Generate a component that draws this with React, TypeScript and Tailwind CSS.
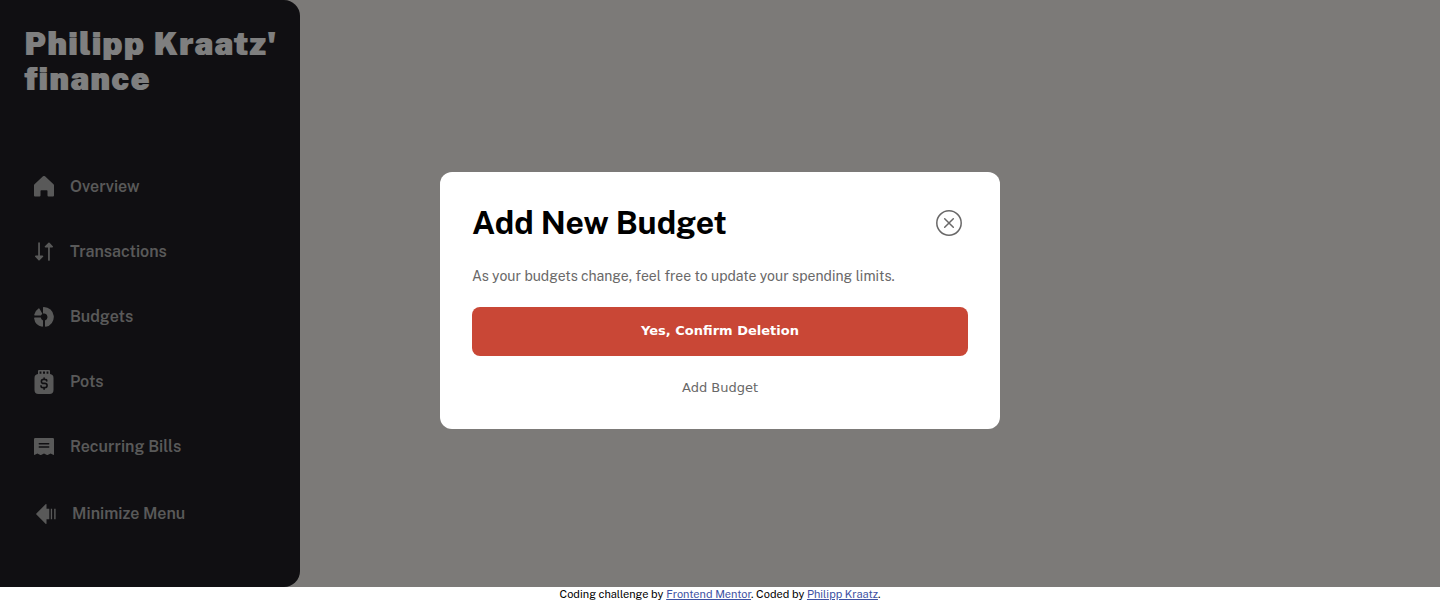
import type { ReactNode } from "react";

const OverviewIcon = () => (
  <svg width="20" height="21" viewBox="0 0 20 21" fill="currentColor" aria-hidden="true">
    <path d="M20 9.3V19.500a1 1 0 0 1-1 1h-4.500a1 1 0 0 1-1-1V15a.75.75 0 0 0-.75-.75h-5.500A.75.75 0 0 0 6.500 15v4.500a1 1 0 0 1-1 1H1a1 1 0 0 1-1-1V9.300a1.500 1.500 0 0 1 .5-1.110L9 .35a1.500 1.500 0 0 1 2 0l8.500 7.840a1.500 1.500 0 0 1 .5 1.110Z" />
  </svg>
);

const TransactionsIcon = () => (
  <svg width="18" height="19" viewBox="0 0 18 19" fill="currentColor" aria-hidden="true">
    <path d="M8.100 14.800 4.600 18.300a.8.8 0 0 1-1.150 0L.2 14.800a.78.78 0 0 1 .55-1.300H3.200V1a.85.85 0 0 1 1.700 0v12.500h2.600a.78.78 0 0 1 .6 1.300Z" />
    <path d="M17.800 4.200 14.550.7a.8.8 0 0 0-1.150 0L9.900 4.200a.78.78 0 0 0 .6 1.300h2.600V18a.85.85 0 0 0 1.700 0V5.500h2.450a.78.78 0 0 0 .55-1.300Z" />
  </svg>
);

const BudgetsIcon = () => (
  <svg width="20" height="20" viewBox="0 0 20 20" fill="currentColor" aria-hidden="true">
    <path d="M6.900 8.500A3.500 3.500 0 0 1 8 7.200a.7.7 0 0 0 .2-.8L5.500 1.700a.7.7 0 0 0-1-.2A10 10 0 0 0 .2 7.700a.7.700 0 0 0 .7.800Z" />
    <path d="M9 13.400a3.500 3.500 0 0 1-2.200-2.900H.8a.7.700 0 0 0-.7.800A10 10 0 0 0 8.300 19.800a.7.700 0 0 0 .7-.7Z" />
    <path d="M9 .8v5.200a.6.6 0 0 0 .5.600 3.500 3.500 0 0 1 1.500 6.800v5.700a.7.700 0 0 0 .8.700A10 10 0 0 0 9.800 0 .75.75 0 0 0 9 .8Z" />
  </svg>
);

const PotsIcon = () => (
  <svg width="20" height="24" viewBox="-1 0 20 24" fill="currentColor" aria-hidden="true">
    <path
      fillRule="evenodd"
      d="M4 0h10A1 1 0 0 1 15 1V4a4 4 0 0 1 3.500 3.900V20a4 4 0 0 1-4 4H3.500a4 4 0 0 1-4-4V7.900A4 4 0 0 1 3 4V1A1 1 0 0 1 4 0ZM4.600 1.400V3.800H6.400V1.400ZM8 1.400V3.800h2V1.400Zm3.600 0V3.800h1.800V1.400Z"
    />
    <path
      d="M11.800 11c0-1-1-1.600-2.200-1.600H8.600c-1.200 0-2.200.8-2.200 2s1 2 2.200 2h1.200c1.300 0 2.300.8 2.300 2.100s-1 2.100-2.300 2.100H8.300c-1.300 0-2.300-.7-2.300-1.700M9.100 8v1.400M9.100 17.600V19.200"
      fill="none"
      className="stroke-[#201f24]"
      strokeWidth="1.600"
      strokeLinecap="round"
    />
  </svg>
);

const BillsIcon = () => (
  <svg width="20" height="17" viewBox="0 0 20 17" fill="currentColor" aria-hidden="true">
    <path
      fillRule="evenodd"
      d="M1.200 0H18.800A1.200 1.200 0 0 1 20 1.200V16.300a.6.6 0 0 1-.9.500L16.600 15.400 13.600 16.900a.7.700 0 0 1-.6 0L10 15.400 7 16.900a.7.700 0 0 1-.6 0L3.400 15.400.9 16.800a.6.600 0 0 1-.9-.5V1.200A1.200 1.200 0 0 1 1.200 0ZM5.300 5a.75.75 0 0 0 0 1.500h9.400a.75.75 0 0 0 0-1.500Zm0 3.300a.75.75 0 0 0 0 1.500h9.400a.75.75 0 0 0 0-1.500Z"
    />
  </svg>
);

const MinimizeIcon = () => (
  <svg width="20" height="20" viewBox="0 0 20 20" fill="currentColor" aria-hidden="true">
    <path d="M10.500.5V4.800H13.300V15.200H10.500V19.500a.5.500 0 0 1-.9.300L.4 10.500a.7.700 0 0 1 0-1L9.600.2a.5.500 0 0 1 .9.300ZM14.800 4.800h1.300V15.200H14.800ZM18.200 4.800h1.400V15.200H18.200Z" />
  </svg>
);

const links: { label: string; icon: ReactNode }[] = [
  { label: "Overview", icon: <OverviewIcon /> },
  { label: "Transactions", icon: <TransactionsIcon /> },
  { label: "Budgets", icon: <BudgetsIcon /> },
  { label: "Pots", icon: <PotsIcon /> },
  { label: "Recurring Bills", icon: <BillsIcon /> },
];

function Sidebar() {
  return (
    <aside className="w-[300px] shrink-0 rounded-r-2xl bg-[#201f24] pt-[26px] text-[#b3b3b3]">
      <h2 className="px-6 text-[32px] leading-[35px] font-black tracking-wider whitespace-nowrap text-white [text-shadow:1px_0_white]">
        Philipp Kraatz'
        <br />
        finance
      </h2>
      <nav className="mt-[58px] flex flex-col px-8" aria-label="Main">
        {links.map(({ label, icon }) => (
          <a key={label} href="#" className="flex h-[65px] items-center gap-[14px] font-semibold">
            <span className="flex w-6 justify-center">{icon}</span>
            {label}
          </a>
        ))}
      </nav>
      <button type="button" className="mt-[2px] ml-9 flex h-[65px] items-center gap-4 font-semibold">
        <MinimizeIcon />
        Minimize Menu
      </button>
    </aside>
  );
}

function BudgetDialog() {
  return (
    <div className="fixed inset-0 flex items-center justify-center p-4">
      <div
        role="dialog"
        aria-modal="true"
        aria-labelledby="dialog-title"
        className="flex w-full max-w-[560px] flex-col rounded-xl bg-white p-8 text-sm text-[#696868]"
      >
        <div className="flex items-center justify-between">
          <h1 id="dialog-title" className="text-[32px] leading-[38px] font-bold text-black">
            Add New Budget
          </h1>
          <button type="button" aria-label="Close" className="mr-[6px]">
            <svg width="26" height="26" viewBox="0 0 26 26" fill="none" stroke="currentColor" strokeWidth="1.500" strokeLinecap="round">
              <circle cx="13" cy="13" r="12.200" />
              <path d="m8.700 8.700 8.600 8.600m0-8.600-8.600 8.600" />
            </svg>
          </button>
        </div>
        <p className="mt-6 leading-[21px]">As your budgets change, feel free to update your spending limits.</p>
        <button
          type="button"
          className="mt-5 h-[49px] rounded-lg bg-[#c94736] font-['DejaVu_Sans',sans-serif] text-[13px] font-bold text-white"
        >
          Yes, Confirm Deletion
        </button>
        <button type="button" className="mt-[23px] font-['DejaVu_Sans',sans-serif] text-[13px] leading-[18px]">
          Add Budget
        </button>
      </div>
    </div>
  );
}

export default function App() {
  return (
    <div className="flex min-h-screen flex-col bg-white font-['Public_Sans',Inter,sans-serif]">
      <main className="relative flex flex-1 bg-[#f8f4f0]">
        <Sidebar />
        <div className="absolute inset-0 bg-black/50" />
        <BudgetDialog />
      </main>
      <footer className="pt-px text-center text-[11px] leading-3 text-black">
        Coding challenge by{" "}
        <a href="#" className="text-[#3e52a3] underline">
          Frontend Mentor
        </a>
        . Coded by{" "}
        <a href="#" className="text-[#3e52a3] underline">
          Philipp Kraatz
        </a>
        .
      </footer>
    </div>
  );
}
